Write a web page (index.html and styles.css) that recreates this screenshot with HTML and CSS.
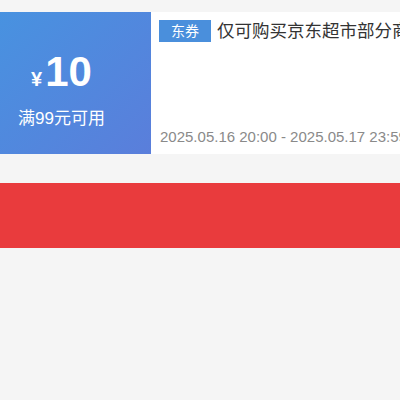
FILE: index.html
```html
<!DOCTYPE html>
<html lang="zh">
<head>
<meta charset="utf-8">
<link rel="stylesheet" href="styles.css">
</head>
<body>
<div class="coupon">
  <div class="coupon-left">
    <div class="amount"><span class="yen">¥</span><span class="num">10</span></div>
    <div class="cond">满99元可用</div>
  </div>
  <div class="coupon-right">
    <div class="title-row">
      <span class="badge">东券</span>
      <span class="title">仅可购买京东超市部分商品</span>
    </div>
    <div class="date">2025.05.16 20:00 - 2025.05.17 23:59</div>
  </div>
</div>
<div class="red-bar"></div>
</body>
</html>
```
FILE: styles.css
```css
html, body {
  margin: 0;
  padding: 0;
  background: #f5f5f5;
  font-family: "Liberation Sans", "Noto Sans CJK SC", sans-serif;
}
.coupon {
  margin-top: 12px;
  height: 142px;
  display: flex;
  background: #fff;
}
.coupon-left {
  width: 151px;
  flex: none;
  box-sizing: border-box;
  padding-right: 28px;
  padding-top: 39px;
  display: flex;
  flex-direction: column;
  align-items: center;
  color: #fff;
  background: linear-gradient(135deg, #4892e0 0%, #5a7edb 100%);
}
.amount {
  line-height: 42px;
  height: 42px;
  font-weight: bold;
  white-space: nowrap;
}
.yen {
  font-size: 20px;
  margin-right: 3px;
}
.num {
  font-size: 42px;
}
.cond {
  margin-top: 18px;
  font-size: 17px;
  line-height: 16px;
  white-space: nowrap;
}
.coupon-right {
  flex: 1;
  min-width: 0;
  padding: 8px 0 7px 8px;
  display: flex;
  flex-direction: column;
  overflow: hidden;
}
.title-row {
  display: flex;
  align-items: center;
  white-space: nowrap;
}
.badge {
  flex: none;
  width: 52px;
  height: 22px;
  line-height: 22px;
  text-align: center;
  background: #4a8fdc;
  color: #fff;
  font-size: 14px;
}
.title {
  margin-left: 6px;
  font-size: 17.5px;
  line-height: 22px;
  color: #333;
}
.date {
  margin-top: auto;
  padding-left: 1px;
  font-size: 15px;
  line-height: 20px;
  color: #8a8a8a;
  white-space: nowrap;
}
.red-bar {
  margin-top: 29px;
  height: 65px;
  background: #e93b3d;
}
```
